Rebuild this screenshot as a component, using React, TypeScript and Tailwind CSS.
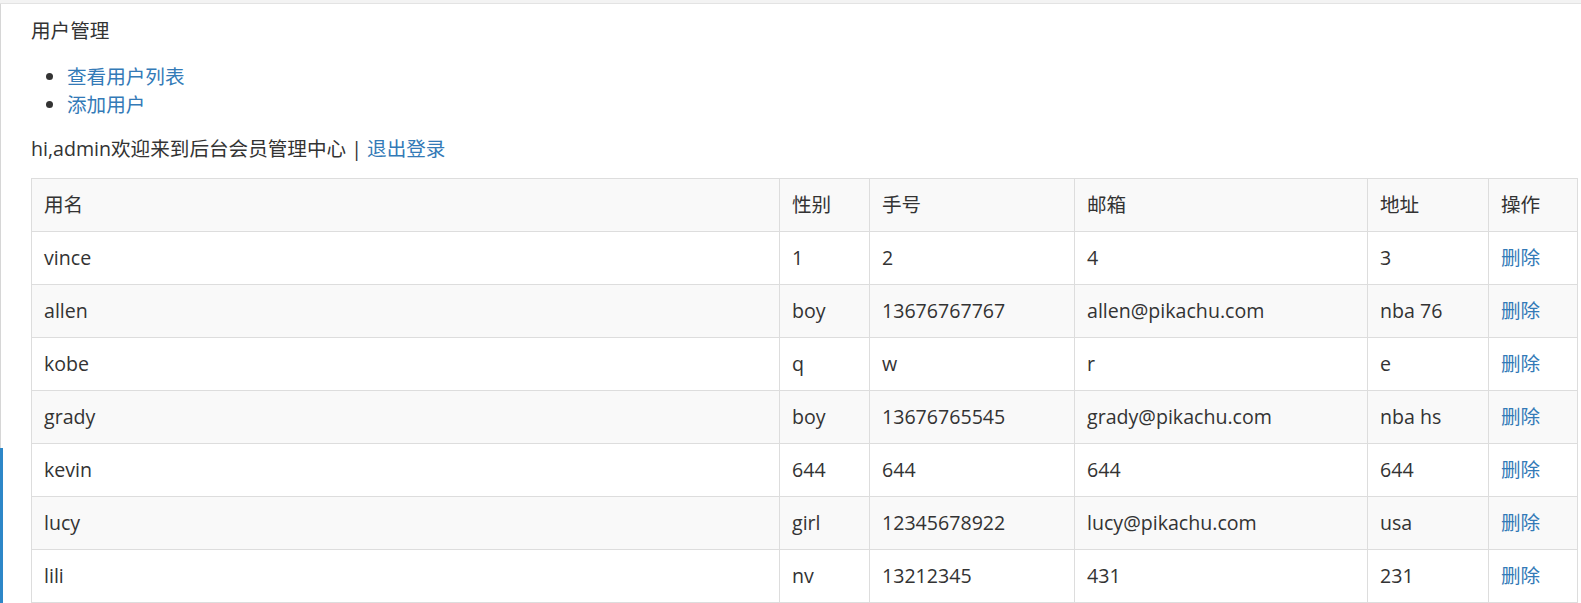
import React from 'react';

const users = [
  { name: 'vince', sex: '1', phone: '2', email: '4', address: '3' },
  { name: 'allen', sex: 'boy', phone: '13676767767', email: 'allen@pikachu.com', address: 'nba 76' },
  { name: 'kobe', sex: 'q', phone: 'w', email: 'r', address: 'e' },
  { name: 'grady', sex: 'boy', phone: '13676765545', email: 'grady@pikachu.com', address: 'nba hs' },
  { name: 'kevin', sex: '644', phone: '644', email: '644', address: '644' },
  { name: 'lucy', sex: 'girl', phone: '12345678922', email: 'lucy@pikachu.com', address: 'usa' },
  { name: 'lili', sex: 'nv', phone: '13212345', email: '431', address: '231' },
];

const cell = 'border border-[#dddddd] px-[12px] py-[12px] text-left font-normal align-top';

export default function App() {
  return (
    <div
      className="min-h-[603px] bg-white text-[#333333] text-[19.6px] leading-[28px]"
      style={{ fontFamily: '"Open Sans", "Noto Sans CJK SC", sans-serif' }}
    >
      <div className="h-[4px] bg-[#f3f3f3] border-b border-[#e3e3e3]" />
      <div className="flex">
        {/* left edge of the sidebar frame */}
        <div className="flex flex-col w-[3px] shrink-0">
          <div className="h-[444px] w-[1px] bg-[#d6d6d6]" />
          <div className="flex-1 bg-[#2d87c8]" />
        </div>

        <div className="pl-[28px] pr-[4px] pt-[13px] flex-1">
          <div>用户管理</div>

          <ul className="mt-[18px] pl-[36px] list-disc marker:text-[#333333]">
            <li>
              <a href="#" className="text-[#337ab7]">查看用户列表</a>
            </li>
            <li>
              <a href="#" className="text-[#337ab7]">添加用户</a>
            </li>
          </ul>

          <p className="mt-[16px]">
            hi,admin欢迎来到后台会员管理中心 | <a href="#" className="text-[#337ab7]">退出登录</a>
          </p>

          <table className="mt-[15px] w-[1546px] table-fixed border-collapse">
            <colgroup>
              <col className="w-[748px]" />
              <col className="w-[90px]" />
              <col className="w-[205px]" />
              <col className="w-[293px]" />
              <col className="w-[121px]" />
              <col className="w-[89px]" />
            </colgroup>
            <tbody>
              <tr className="bg-[#f9f9f9]">
                <td className={cell}>用名</td>
                <td className={cell}>性别</td>
                <td className={cell}>手号</td>
                <td className={cell}>邮箱</td>
                <td className={cell}>地址</td>
                <td className={cell}>操作</td>
              </tr>
              {users.map((u, i) => (
                <tr key={u.name} className={i % 2 === 1 ? 'bg-[#f9f9f9]' : 'bg-white'}>
                  <td className={cell}>{u.name}</td>
                  <td className={cell}>{u.sex}</td>
                  <td className={cell}>{u.phone}</td>
                  <td className={cell}>{u.email}</td>
                  <td className={cell}>{u.address}</td>
                  <td className={cell}>
                    <a href="#" className="text-[#337ab7]">删除</a>
                  </td>
                </tr>
              ))}
            </tbody>
          </table>
        </div>
      </div>
    </div>
  );
}
